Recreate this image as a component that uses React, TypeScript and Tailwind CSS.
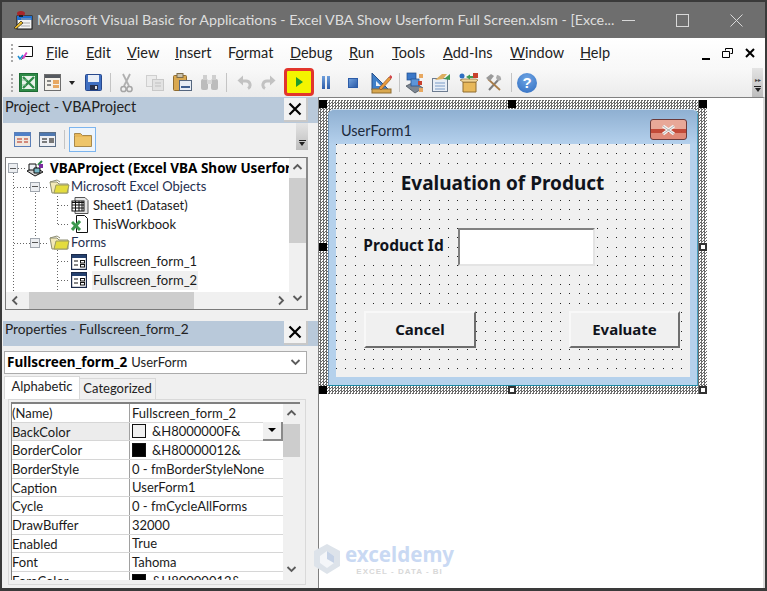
import type { ReactNode } from 'react';

const ui = "font-['Lato','Noto_Sans',sans-serif]";
const heavy = "font-['Noto_Sans','Liberation_Sans',sans-serif] font-bold";

function Icon({ w, h, className, children }: { w: number; h: number; className?: string; children: ReactNode }) {
  return (
    <svg width={w} height={h} viewBox={`0 0 ${w} ${h}`} className={`shrink-0 ${className ?? ''}`}>
      {children}
    </svg>
  );
}

function Gripper() {
  return (
    <div className="flex w-[3px] flex-col gap-[2px]">
      <span className="h-[2px] w-[2px] bg-[#a9a9a9]" />
      <span className="h-[2px] w-[2px] bg-[#a9a9a9]" />
      <span className="h-[2px] w-[2px] bg-[#a9a9a9]" />
      <span className="h-[2px] w-[2px] bg-[#a9a9a9]" />
      <span className="h-[2px] w-[2px] bg-[#a9a9a9]" />
    </div>
  );
}

function Sep({ className }: { className?: string }) {
  return <span className={`h-[19px] w-px shrink-0 bg-[#c4c4c4] ${className ?? ''}`} />;
}

function AppIcon() {
  return (
    <Icon w={20} h={20}>
      <rect x="4" y="6" width="15" height="13" fill="#f4f4f4" stroke="#111" />
      <rect x="4" y="6" width="15" height="4" fill="#1f6fd0" />
      <path d="M8 9h10M8 13h9M8 16h9" stroke="#a9a9a9" />
      <ellipse cx="8" cy="3.5" rx="4" ry="2.5" fill="#a8262a" />
      <rect x="6" y="5" width="4" height="2" fill="#222" />
      <path d="M1 18 8 11l2 2-7 6z" fill="#e8b828" stroke="#222" strokeWidth="0.7" />
    </Icon>
  );
}

function MenuIcon() {
  return (
    <Icon w={18} h={16}>
      <path d="M1.5 1.5h14v10h-9l-2 3" fill="#fff" stroke="#111" />
      <path d="M5 13 9 7l1.5 1L7 14z" fill="#d946c8" />
      <path d="M1 11l2 3 3-4" fill="none" stroke="#1a8ad0" strokeWidth="1.5" />
    </Icon>
  );
}

function ExcelTool() {
  return (
    <Icon w={19} h={19}>
      <rect x="0.5" y="0.5" width="18" height="18" fill="#2f8a47" stroke="#1d6b34" />
      <rect x="3" y="3" width="13" height="13" fill="#e8f3ea" />
      <path d="M4 4l11 11M15 4 4 15" stroke="#2f8a47" strokeWidth="2.4" />
      <path d="M3 7h5M3 12h4" stroke="#7fb98f" />
    </Icon>
  );
}

function FormTool() {
  return (
    <Icon w={17} h={17}>
      <rect x="0.5" y="0.5" width="16" height="16" fill="#f4f1ea" stroke="#6d6d6d" />
      <rect x="1" y="1" width="15" height="3" fill="#55595f" />
      <rect x="9" y="6" width="6" height="4" fill="#e8a860" />
      <rect x="9" y="11" width="6" height="3" fill="#e8a860" />
      <path d="M3 7h4M3 11h4" stroke="#666" strokeWidth="1.5" />
    </Icon>
  );
}

function SaveTool() {
  return (
    <Icon w={17} h={17}>
      <rect x="0.5" y="0.5" width="16" height="16" rx="1" fill="#3f6fc2" stroke="#27488c" />
      <rect x="3" y="1" width="11" height="7" fill="#e9eef6" />
      <rect x="5" y="11" width="8" height="5" fill="#27304a" />
      <rect x="10" y="12" width="2" height="3" fill="#e6e6e6" />
    </Icon>
  );
}

function CutTool() {
  return (
    <Icon w={13} h={20}>
      <path d="M3 1l6 12M10 1 4 13" stroke="#b0b0b0" strokeWidth="1.8" />
      <circle cx="3.5" cy="16" r="2.6" fill="none" stroke="#a5a5a5" strokeWidth="1.5" />
      <circle cx="9.5" cy="16" r="2.6" fill="none" stroke="#a5a5a5" strokeWidth="1.5" />
    </Icon>
  );
}

function CopyTool() {
  return (
    <Icon w={18} h={16}>
      <rect x="0.5" y="0.5" width="10" height="11" fill="#ececec" stroke="#cfcfcf" />
      <rect x="6.5" y="4.5" width="11" height="11" fill="#e2e2e2" stroke="#c8c8c8" />
      <path d="M9 8h6M9 11h6" stroke="#c0c0c0" />
    </Icon>
  );
}

function PasteTool() {
  return (
    <Icon w={19} h={19}>
      <rect x="0.5" y="2.5" width="13" height="15" rx="1" fill="#d9a850" stroke="#8f6c30" />
      <rect x="4" y="0.5" width="6" height="4" fill="#c9c1ac" stroke="#7d6d4a" />
      <rect x="6.5" y="7.5" width="12" height="10" fill="#e8edf4" stroke="#55667e" />
      <path d="M8 14h9" stroke="#3f5f90" strokeWidth="2" />
    </Icon>
  );
}

function FindTool() {
  return (
    <Icon w={19} h={17}>
      <rect x="1" y="5" width="7" height="11" rx="2" fill="#bcbcbc" />
      <rect x="11" y="5" width="7" height="11" rx="2" fill="#bcbcbc" />
      <rect x="3" y="1" width="4" height="5" fill="#cfcfcf" />
      <rect x="12" y="1" width="4" height="5" fill="#cfcfcf" />
      <rect x="7" y="6" width="5" height="4" fill="#d8d8d8" />
    </Icon>
  );
}

function UndoTool({ flip }: { flip?: boolean }) {
  return (
    <Icon w={15} h={15} className={flip ? '-scale-x-100' : ''}>
      <path d="M3 6h6a4 4 0 0 1 2 7.5" fill="none" stroke="#c2c2c2" strokeWidth="3" />
      <path d="M6 0.5v10L0.5 5.5z" fill="#c2c2c2" />
    </Icon>
  );
}

function DesignTool() {
  return (
    <Icon w={21} h={22}>
      <path d="M1 1v17h17z" fill="#3f7fc8" stroke="#27508c" />
      <path d="M5 9v5h5z" fill="#eef2f8" />
      <rect x="1" y="17" width="19" height="4" fill="#d9a850" stroke="#8f6c30" />
      <path d="M8 16 18 5l2 2-10 11z" fill="#e89a3c" stroke="#8a4c18" strokeWidth="0.6" />
      <path d="M18 5l1.5-2 2 2-1.5 2z" fill="#d2464a" />
    </Icon>
  );
}

function ExplorerTool() {
  return (
    <Icon w={20} h={22}>
      <path d="M1 14l9 7 8-5-9-6z" fill="#7c8692" stroke="#3d4650" strokeWidth="0.7" />
      <rect x="2" y="1" width="9" height="7" fill="#3b78c8" stroke="#1f4c8c" strokeWidth="0.7" />
      <rect x="6" y="7" width="8" height="7" fill="#5d95d8" stroke="#1f4c8c" strokeWidth="0.7" />
      <rect x="14" y="2" width="4" height="4" fill="#e8a860" />
      <rect x="13" y="9" width="4" height="4" fill="#c8402c" />
      <rect x="14" y="16" width="4" height="4" fill="#e8a860" />
    </Icon>
  );
}

function PropsTool() {
  return (
    <Icon w={20} h={19}>
      <rect x="0.5" y="5.5" width="15" height="13" fill="#e8eef6" stroke="#6d7c90" />
      <path d="M3 10h10M3 13h10M3 16h10" stroke="#7b9cc8" />
      <path d="M3 7 10 1h5l-4 5z" fill="#dcae60" />
      <path d="M12 6 18 1v6z" fill="#3f9a55" />
    </Icon>
  );
}

function BrowserTool() {
  return (
    <Icon w={20} h={20}>
      <path d="M4 9h13v10H4z" fill="#e8b85a" stroke="#8f6c30" />
      <path d="M1 7 4 9h13l2-2-2-1H4z" fill="#f2d698" stroke="#8f6c30" strokeWidth="0.7" />
      <circle cx="3" cy="3" r="2.5" fill="#2f6fc2" />
      <rect x="14" y="0" width="5" height="5" fill="#c8402c" />
      <path d="M7 4l4-2.5v5z" fill="#3f9a55" />
      <rect x="10" y="3" width="4" height="2" fill="#3f9a55" />
    </Icon>
  );
}

function ToolsTool() {
  return (
    <Icon w={16} h={17}>
      <path d="M3 16 13 5" stroke="#7d7d7d" strokeWidth="2" />
      <path d="M2 5l12 11" stroke="#a87c48" strokeWidth="1.8" />
      <path d="M0 4l5-4 3 2-4 5z" fill="#999" />
      <path d="M11 1a4 4 0 0 1 4 5l-3 1-2-3z" fill="#aaa" />
    </Icon>
  );
}

function HelpTool() {
  return (
    <div className="flex h-[20px] w-[20px] shrink-0 items-center justify-center rounded-full bg-[radial-gradient(circle_at_50%_30%,#6fa5e4,#2f6cc0)] text-[15px] leading-none font-bold text-white font-['Liberation_Sans',sans-serif]">
      ?
    </div>
  );
}

function PanelClose() {
  return (
    <div className="flex h-[24px] w-[24px] shrink-0 items-center justify-center border-r-2 border-b-2 border-[#c8c8c8] bg-[#f2f2f2]">
      <Icon w={14} h={14}>
        <path d="M1.5 1.5l11 11M12.5 1.5l-11 11" stroke="#000" strokeWidth="2.2" />
      </Icon>
    </div>
  );
}

function Chevron({ dir, className }: { dir: 'up' | 'down' | 'left' | 'right'; className?: string }) {
  const d = {
    up: 'M1.5 7 5.5 3l4 4',
    down: 'M1.5 3l4 4 4-4',
    left: 'M7 1.5 3 5.5l4 4',
    right: 'M4 1.5l4 4-4 4',
  }[dir];
  return (
    <Icon w={11} h={11} className={className}>
      <path d={d} fill="none" stroke="#5c5c5c" strokeWidth="1.8" />
    </Icon>
  );
}

function Expander() {
  return (
    <span className="flex h-[10px] w-[10px] shrink-0 items-center justify-center border border-[#a0a6ae] bg-[#eceef1]">
      <span className="h-px w-[6px] bg-[#555]" />
    </span>
  );
}

function ProjectGlyph() {
  return (
    <Icon w={20} h={18}>
      <path d="M1 12l8 5 8-4-8-5z" fill="#d5d5d5" stroke="#111" />
      <path d="M3 5h7v6H3z" fill="#eef2f6" stroke="#111" />
      <path d="M8 9h6v5H8z" fill="#79b8c8" stroke="#111" />
      <path d="M12 6l4-4" stroke="#2f8a47" strokeWidth="2" />
      <rect x="13" y="5" width="4" height="4" fill="#7c2aa0" />
    </Icon>
  );
}

function FolderGlyph() {
  return (
    <Icon w={21} h={15}>
      <path d="M1 3h7l2 2h9v9H3z" fill="#f2e9b8" stroke="#8d8d70" />
      <path d="M1 3l7-2 3 2" fill="none" stroke="#8d8d70" />
      <path d="M7 6h13l-2 8H5z" fill="#e4dc3e" stroke="#9a9a60" />
    </Icon>
  );
}

function SheetGlyph() {
  return (
    <Icon w={18} h={17}>
      <path d="M4 0.5h10l3 3v13H4z" fill="#e6e6e6" stroke="#555" />
      <rect x="1" y="4" width="12" height="10" fill="#fff" stroke="#111" />
      <path d="M1 5.5h12M1 8h12M1 11h12M4.5 4v10M8 4v10M11 4v10" stroke="#111" />
    </Icon>
  );
}

function BookGlyph() {
  return (
    <Icon w={18} h={18}>
      <path d="M5.5 0.5h8l3 3v14h-11z" fill="#fff" stroke="#111" />
      <path d="M1 7l8 8M9 6l-8 9" stroke="#3d9a50" strokeWidth="3" />
    </Icon>
  );
}

function FormGlyph() {
  return (
    <Icon w={16} h={16}>
      <rect x="0.5" y="0.5" width="15" height="15" fill="#fff" stroke="#1b2a4a" strokeWidth="1.4" />
      <rect x="1" y="1" width="14" height="3" fill="#24406e" />
      <path d="M3 7h4M3 11h4" stroke="#111" />
      <rect x="9.5" y="6.5" width="4" height="2.5" fill="none" stroke="#111" />
      <rect x="9.5" y="10.5" width="4" height="2.5" fill="none" stroke="#111" />
    </Icon>
  );
}

function TreeLines() {
  return (
    <svg width="90" height="135" className="absolute top-0 left-0" stroke="#666" strokeDasharray="1 2">
      <path d="M7.5 15V135M29.5 35V81M51.5 38V66M51.5 92V135" fill="none" />
      <path d="M12 10.5h9M8 29.5h16M8 85.5h16M34 29.5h9M34 85.5h9M52 47.5h12M52 66.5h12M52 103.5h12M52 122.5h12" fill="none" />
    </svg>
  );
}

function TreeRow({ indent, children }: { indent: string; children: ReactNode }) {
  return <div className={`flex h-[18.67px] items-center whitespace-nowrap ${indent}`}>{children}</div>;
}

function Tree() {
  return (
    <div className="flex h-[153px] border border-[#7a7a7a] border-r-2 border-r-[#8a8a8a] bg-white">
      <div className="flex min-w-0 flex-1 flex-col">
        <div className={`relative flex-1 overflow-hidden pt-px text-[13px] text-[#1a1a1a] ${ui}`}>
          <TreeLines />
          <div className="relative">
            <TreeRow indent="pl-[2px]">
              <Expander />
              <span className="ml-[8px]"><ProjectGlyph /></span>
              <span className={`ml-[4px] text-[13.5px] text-black ${heavy}`}>VBAProject (Excel VBA Show Userform Full Screen.xlsm)</span>
            </TreeRow>
            <TreeRow indent="pl-[24px]">
              <Expander />
              <span className="ml-[9px]"><FolderGlyph /></span>
              <span className="ml-[1px] text-[#1f2f50]">Microsoft Excel Objects</span>
            </TreeRow>
            <TreeRow indent="pl-[65px]">
              <SheetGlyph />
              <span className="ml-[4px]">Sheet1 (Dataset)</span>
            </TreeRow>
            <TreeRow indent="pl-[65px]">
              <BookGlyph />
              <span className="ml-[4px]">ThisWorkbook</span>
            </TreeRow>
            <TreeRow indent="pl-[24px]">
              <Expander />
              <span className="ml-[9px]"><FolderGlyph /></span>
              <span className="ml-[1px] text-[#1f2f50]">Forms</span>
            </TreeRow>
            <TreeRow indent="pl-[65px]">
              <FormGlyph />
              <span className="ml-[6px]">Fullscreen_form_1</span>
            </TreeRow>
            <TreeRow indent="pl-[65px]">
              <FormGlyph />
              <span className="ml-[5px] bg-[#f0f0f0] px-px">Fullscreen_form_2</span>
            </TreeRow>
          </div>
        </div>
        <div className="flex h-[17px] items-center bg-[#f0f0f0]">
          <Chevron dir="left" className="ml-[4px]" />
          <div className="ml-[8px] h-full w-[165px] bg-[#cdcdcd]" />
          <Chevron dir="right" className="ml-auto mr-[3px]" />
        </div>
      </div>
      <VScroll thumbTop="mt-[5px]" thumbH="h-[65px]" />
    </div>
  );
}

function VScroll({ thumbTop, thumbH }: { thumbTop: string; thumbH: string }) {
  return (
    <div className="flex w-[17px] shrink-0 flex-col items-center bg-[#f0f0f0] pt-[4px] pb-[5px]">
      <Chevron dir="up" />
      <div className={`w-full bg-[#cdcdcd] ${thumbTop} ${thumbH}`} />
      <Chevron dir="down" className="mt-auto" />
    </div>
  );
}

function PropRow({ name, value, swatch, active }: { name: string; value: string; swatch?: string; active?: boolean }) {
  return (
    <div className="flex h-[18.67px] shrink-0 border-b border-[#d6d6d6] text-[13px] leading-[18px] whitespace-nowrap text-[#1a1a1a]">
      <div className={`w-[118px] shrink-0 border-r border-[#a0a0a0] ${active ? 'bg-[#ececec]' : ''}`}>{name}</div>
      <div className="flex flex-1 items-center pl-[2px]">
        {swatch && <span className={`mr-[6px] h-[14px] w-[14px] shrink-0 border border-[#111] ${swatch}`} />}
        <span>{value}</span>
        {active && (
          <span className="ml-auto flex h-[19px] w-[20px] items-center justify-center border-r-2 border-b-2 border-[#8a8a8a] bg-[#f0f0f0]">
            <span className="h-0 w-0 border-x-[4px] border-t-[4px] border-x-transparent border-t-black" />
          </span>
        )}
      </div>
    </div>
  );
}

function Properties() {
  return (
    <div className={`flex h-[186px] border border-[#d9d9d9] bg-[#f0f0f0] p-[2px] ${ui}`}>
      <div className="mb-[2px] flex min-w-0 flex-1 overflow-hidden border-t-2 border-l border-[#808080] bg-white">
        <div className="flex min-w-0 flex-1 flex-col overflow-hidden">
          <PropRow name="(Name)" value="Fullscreen_form_2" />
          <PropRow name="BackColor" value="&H8000000F&" swatch="bg-[#f0f0f0]" active />
          <PropRow name="BorderColor" value="&H80000012&" swatch="bg-black" />
          <PropRow name="BorderStyle" value="0 - fmBorderStyleNone" />
          <PropRow name="Caption" value="UserForm1" />
          <PropRow name="Cycle" value="0 - fmCycleAllForms" />
          <PropRow name="DrawBuffer" value="32000" />
          <PropRow name="Enabled" value="True" />
          <PropRow name="Font" value="Tahoma" />
          <PropRow name="ForeColor" value="&H80000012&" swatch="bg-black" />
        </div>
        <VScroll thumbTop="mt-[5px]" thumbH="h-[33px]" />
      </div>
      <div className="w-[3px] shrink-0" />
    </div>
  );
}

function Handle({ pos, white }: { pos: string; white?: boolean }) {
  return <span className={`absolute h-[8px] w-[8px] border-2 ${white ? 'border-[#333] bg-white' : 'border-black bg-black'} ${pos}`} />;
}

// design-time grid of the form: crisp 1px dots on a 9.33px pitch
function DesignGrid() {
  const dots: ReactNode[] = [];
  for (let r = 0; r < 25; r++) {
    for (let c = 0; c < 38; c++) {
      dots.push(<rect key={`${r}-${c}`} x={Math.round(c * 9.33)} y={Math.round(r * 9.33)} width="1" height="1" fill="#222" />);
    }
  }
  return (
    <svg width="353" height="233" className="absolute top-0 left-0">
      {dots}
    </svg>
  );
}

function UserForm() {
  return (
    <div className="relative h-[294px] w-[388px] bg-[repeating-conic-gradient(#6a6a6a_0_25%,#fff_0_50%)] bg-[length:3px_3px] pt-[9px] pr-[9px] pb-[8px] pl-[9px]">
      <Handle pos="top-0 left-0" />
      <Handle pos="top-0 left-[189px]" />
      <Handle pos="top-0 right-0" />
      <Handle pos="top-[143px] left-0" />
      <Handle white pos="top-[143px] right-0" />
      <Handle pos="bottom-0 left-0" />
      <Handle white pos="bottom-0 left-[189px]" />
      <Handle white pos="right-0 bottom-0" />

      <div className="flex h-full flex-col rounded-t-[6px] border border-t-[#d4e2f0] border-r-[#4aa0c0] border-b-[#1c8aa6] border-l-[#6f95b8] bg-[#b5d1ec] px-[7px] pb-[8px]">
        <div className="-mx-[7px] flex h-[34px] shrink-0 items-center justify-between rounded-t-[5px] bg-gradient-to-b from-[#8fb0d2] to-[#b4d0ec] pt-[5px] pr-[10px] pl-[12px]">
          <span className={`mt-[3px] text-[14.5px] text-[#1c2a3c] ${ui}`}>UserForm1</span>
          <div className="flex h-[21px] w-[37px] items-center justify-center rounded-[3px] border border-[#6b3a3a] bg-[linear-gradient(#e8a898_0_45%,#c24a38_45%_70%,#e08a78_70%)]">
            <Icon w={17} h={12}>
              <path d="M3 2l11 8M14 2 3 10" stroke="#f4f4f4" strokeWidth="3.4" />
              <path d="M3 2l11 8M14 2 3 10" stroke="#8a8a8a" strokeWidth="0.6" />
            </Icon>
          </div>
        </div>
        <div className={`relative flex-1 bg-[#f0f0f0] ${heavy}`}>
          <DesignGrid />
          <div className="absolute top-[26px] left-[57px] flex h-[26px] w-[219px] items-center justify-center bg-[#f0f0f0] text-[19px] leading-none whitespace-nowrap text-[#10141c]">
            Evaluation of Product
          </div>
          <div className="absolute top-[88px] left-[24px] flex h-[27px] w-[87px] items-center justify-center bg-[#f0f0f0] text-[15.5px] leading-none whitespace-nowrap text-[#10141c]">
            Product Id
          </div>
          <div className="absolute top-[84px] left-[122px] h-[38px] w-[137px] border-2 border-t-[#808080] border-r-[#e4e4e4] border-b-[#e4e4e4] border-l-[#808080] bg-white" />
          <div className="absolute top-[167px] left-[28px] flex h-[37px] w-[112px] items-center justify-center border-2 border-t-[#f8f8f8] border-r-[#6e6e6e] border-b-[#6e6e6e] border-l-[#f8f8f8] bg-[#f0f0f0] text-[15px] whitespace-nowrap text-[#10141c]">
            Cancel
          </div>
          <div className="absolute top-[167px] left-[233px] flex h-[37px] w-[111px] items-center justify-center border-2 border-t-[#f8f8f8] border-r-[#6e6e6e] border-b-[#6e6e6e] border-l-[#f8f8f8] bg-[#f0f0f0] text-[15px] whitespace-nowrap text-[#10141c]">
            Evaluate
          </div>
        </div>
      </div>
    </div>
  );
}

function Watermark() {
  return (
    <div className="pointer-events-none absolute top-[445px] left-[-7px] flex items-start">
      <Icon w={32} h={32}>
        <path d="M15 1 28 8v15l-13 8L2 23V8z" fill="#dde3ea" />
        <path d="M15 8 22 13v7l-7 5-7-5v-7z" fill="#f4f6f9" />
        <path d="M15 8v8l7 4v-7z" fill="#c5d2e6" />
      </Icon>
      <div className="ml-[1px] flex flex-col items-center">
        <span className={`h-[23px] text-[20.5px] leading-[23px] text-[#c9d9f3] ${heavy}`}>exceldemy</span>
        <span className="mt-px text-[8px] leading-[9px] font-bold tracking-[1px] text-[#d8d8d8] font-['Liberation_Sans',sans-serif]">EXCEL - DATA - BI</span>
      </div>
    </div>
  );
}

export default function App() {
  return (
    <div className={`flex h-[591px] w-[767px] flex-col overflow-hidden border-t-2 border-r-2 border-b-[3px] border-l-2 border-[#3a3a3a] bg-[#f0f0f0] ${ui}`}>
      <header className="flex h-[36px] shrink-0 items-center bg-[#6e6e6e] text-[#dedede]">
        <span className="ml-[11px]"><AppIcon /></span>
        <span className="ml-[4px] text-[14.3px] whitespace-nowrap">
          Microsoft Visual Basic for Applications - Excel VBA Show Userform Full Screen.xlsm - [Exce...
        </span>
        <div className="ml-auto flex items-center">
          <Icon w={13} h={14} className="mr-[41px]"><path d="M0 7.5h13" stroke="#d8d8d8" /></Icon>
          <Icon w={13} h={13} className="mr-[41px]"><rect x="0.5" y="0.5" width="12" height="12" fill="none" stroke="#d8d8d8" /></Icon>
          <Icon w={13} h={13} className="mr-[22px]"><path d="M0.5 0.5l12 12M12.5 0.5l-12 12" stroke="#d8d8d8" /></Icon>
        </div>
      </header>

      <nav className="flex h-[30px] shrink-0 items-center bg-gradient-to-b from-white to-[#f8f8f8] text-[14.5px] text-[#222]">
        <span className="ml-[9px]"><Gripper /></span>
        <span className="ml-[3px]"><MenuIcon /></span>
        <span className="ml-[11px] w-[40px]"><u>F</u>ile</span>
        <span className="w-[41px]"><u>E</u>dit</span>
        <span className="w-[48px]"><u>V</u>iew</span>
        <span className="w-[53px]"><u>I</u>nsert</span>
        <span className="w-[62px]">F<u>o</u>rmat</span>
        <span className="w-[59px]"><u>D</u>ebug</span>
        <span className="w-[43px]"><u>R</u>un</span>
        <span className="w-[51px]"><u>T</u>ools</span>
        <span className="w-[67px]"><u>A</u>dd-Ins</span>
        <span className="w-[70px]"><u>W</u>indow</span>
        <span><u>H</u>elp</span>
        <div className="mr-[10px] ml-auto flex items-center gap-[12px]">
          <span className="mt-[11px] h-[2px] w-[8px] bg-black" />
          <Icon w={11} h={10}>
            <path d="M3.5 2.5V.5h7v5h-2M.5 3.5h7v6h-7z" fill="none" stroke="#000" />
          </Icon>
          <Icon w={10} h={10}><path d="M1 1l8 8M9 1 1 9" stroke="#000" strokeWidth="2" /></Icon>
        </div>
      </nav>

      <div className="flex h-[29px] shrink-0 items-center bg-gradient-to-b from-[#f9f9f9] to-[#ebebeb]">
        <span className="ml-[9px]"><Gripper /></span>
        <span className="ml-[5px]"><ExcelTool /></span>
        <span className="ml-[6px]"><FormTool /></span>
        <span className="ml-[8px] h-0 w-0 border-x-[3.5px] border-t-[4px] border-x-transparent border-t-[#222]" />
        <span className="ml-[10px]"><SaveTool /></span>
        <Sep className="ml-[8px]" />
        <span className="ml-[9px]"><CutTool /></span>
        <span className="ml-[13px]"><CopyTool /></span>
        <span className="ml-[9px]"><PasteTool /></span>
        <span className="ml-[8px]"><FindTool /></span>
        <Sep className="ml-[7px]" />
        <span className="ml-[10px]"><UndoTool /></span>
        <span className="ml-[9px]"><UndoTool flip /></span>
        <div className="-mt-[2px] ml-[8px] flex h-[28px] w-[30px] shrink-0 items-center justify-center rounded-[4px] border-[3px] border-[#e2352c] bg-[#f4f400]">
          <span className="h-0 w-0 border-y-[5.5px] border-l-[7px] border-y-transparent border-l-[#1f9a2c]" />
        </div>
        <div className="ml-[8px] flex h-[13px] gap-[2px]">
          <span className="w-[3px] bg-gradient-to-b from-[#6f9fdc] to-[#2c5ca8]" />
          <span className="w-[3px] bg-gradient-to-b from-[#6f9fdc] to-[#2c5ca8]" />
        </div>
        <span className="ml-[18px] h-[10px] w-[10px] shrink-0 border border-[#2c5ca8] bg-gradient-to-br from-[#6f9fdc] to-[#2c5ca8]" />
        <span className="ml-[13px]"><DesignTool /></span>
        <Sep className="ml-[7px]" />
        <span className="ml-[5px]"><ExplorerTool /></span>
        <span className="ml-[7px]"><PropsTool /></span>
        <span className="ml-[7px]"><BrowserTool /></span>
        <span className="ml-[7px]"><ToolsTool /></span>
        <Sep className="ml-[9px]" />
        <span className="ml-[5px]"><HelpTool /></span>
        <div className="mr-[2px] ml-auto flex h-full w-[11px] flex-col items-center justify-end bg-gradient-to-b from-[#e4e4e4] to-[#bdbdbd] pb-[5px]">
          <span className="mb-[3px] text-[6px] leading-none text-[#444]">▸▸</span>
          <span className="mb-[1px] h-px w-[7px] bg-[#222]" />
          <span className="h-0 w-0 border-x-[3.5px] border-t-[4px] border-x-transparent border-t-[#222]" />
        </div>
      </div>

      <main className="flex min-h-0 flex-1">
        <aside className="flex w-[316px] shrink-0 flex-col pl-px">
          <div className="flex h-[26px] shrink-0 items-start justify-between bg-[#b9c9da] pt-px pr-[10px] text-[14.5px] leading-[18px] text-[#222]">
            <span className="ml-[2px]">Project - VBAProject</span>
            <PanelClose />
          </div>
          <div className="flex h-[32px] shrink-0 items-center pl-[11px]">
            <Icon w={18} h={15}>
              <rect x="0.5" y="0.5" width="16" height="14" fill="#f0e8e0" stroke="#5b7fb8" />
              <rect x="1" y="1" width="15" height="3" fill="#4f80c8" />
              <path d="M3 7h5M3 10h5M10 7h4M10 10h4" stroke="#c86858" strokeWidth="1.5" />
            </Icon>
            <Icon w={18} h={15} className="ml-[7px]">
              <rect x="0.5" y="0.5" width="16" height="14" fill="#eef0f4" stroke="#5b6f88" />
              <rect x="1" y="1" width="15" height="3" fill="#4f78b0" />
              <path d="M3 7h5M3 10h5" stroke="#555" strokeWidth="1.5" />
              <rect x="10" y="6" width="5" height="5" fill="#777" />
            </Icon>
            <Sep className="ml-[7px]" />
            <div className="ml-[4px] flex h-[25px] w-[27px] items-center justify-center border border-[#7db5ee] bg-[#eef5fc]">
              <Icon w={18} h={15}>
                <path d="M0.5 3.5V1.5h6l2 2h9v11h-17z" fill="#e8b85a" stroke="#a8894c" />
                <path d="M1 5h16v9H1z" fill="#eec56a" />
              </Icon>
            </div>
            <div className="mr-[10px] ml-auto flex h-[27px] w-[12px] flex-col items-center justify-end self-start bg-gradient-to-b from-[#e4e4e4] to-[#bdbdbd] pb-[4px]">
              <span className="mb-[1px] h-px w-[7px] bg-[#222]" />
              <span className="h-0 w-0 border-x-[3.5px] border-t-[4px] border-x-transparent border-t-[#222]" />
            </div>
          </div>
          <div className="mt-[2px] mr-[10px] ml-[2px] shrink-0">
            <Tree />
          </div>
          <div className="mt-[11px] flex h-[25px] shrink-0 items-start justify-between bg-[#b9c9da] pr-[10px] text-[13.7px] leading-[16px] text-[#222]">
            <span className="ml-[2px]">Properties - Fullscreen_form_2</span>
            <PanelClose />
          </div>
          <div className="mt-[5px] mr-[11px] ml-[1px] flex h-[23px] shrink-0 items-center border border-[#ababab] bg-white pr-[5px] pl-[2px] text-[13px] whitespace-nowrap text-[#222]">
            <span className={`text-[13.5px] text-black ${heavy}`}>Fullscreen_form_2</span>
            <span className="ml-[4px]">UserForm</span>
            <Chevron dir="down" className="ml-auto" />
          </div>
          <div className="mt-[2px] flex h-[23px] shrink-0 items-end pl-px text-[13px] text-[#222]">
            <div className="flex h-[23px] w-[76px] items-center justify-center border-t border-r border-l border-[#d9d9d9] bg-white pb-[3px]">Alphabetic</div>
            <div className="flex h-[21px] w-[76px] items-center justify-center border-t border-r border-[#d9d9d9]">Categorized</div>
          </div>
          <div className="mr-[12px] ml-[5px] shrink-0">
            <Properties />
          </div>
        </aside>
        <section className="relative flex-1 border-t border-r-2 border-l border-[#808080] border-r-[#dcdcdc] bg-white pt-[2px]">
          <UserForm />
          <Watermark />
        </section>
      </main>
    </div>
  );
}
